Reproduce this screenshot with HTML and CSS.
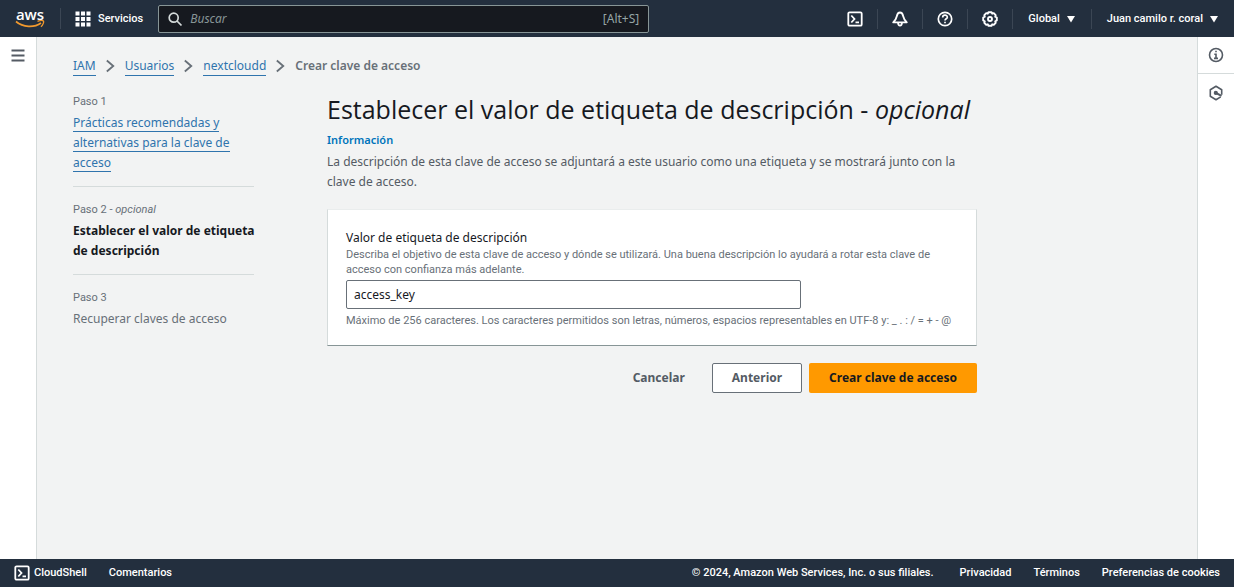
FILE: index.html
```html
<!DOCTYPE html>
<html lang="es">
<head>
<meta charset="utf-8">
<meta name="viewport" content="width=device-width, initial-scale=1">
<title>Crear clave de acceso | IAM</title>
<link rel="stylesheet" href="styles.css">
</head>
<body class="page">
<header class="topbar">
  <a class="logo" href="#" aria-label="Inicio de aws">
    <span class="logo-text">aws</span>
    <svg class="logo-smile" viewBox="0 0 30 9" aria-hidden="true"><path d="M1 1.500C8 7.500 19 8 26 3" fill="none" stroke="#f29a2e" stroke-width="1.700"/><path d="M22.500 1.300C25 .5 28 .4 28.500 1.200S28 5 26 6.800" fill="none" stroke="#f29a2e" stroke-width="1.300"/></svg>
  </a>
  <button class="services" type="button">
    <svg class="icon" viewBox="0 0 16 16" fill="currentColor" aria-hidden="true"><path d="M.5.5h4v4h-4zM6 .5h4v4H6zM11.500.5h4v4h-4zM.5 6h4v4h-4zM6 6h4v4H6zM11.500 6h4v4h-4zM.5 11.500h4v4h-4zM6 11.500h4v4H6zM11.500 11.500h4v4h-4z"/></svg>
    <span>Servicios</span>
  </button>
  <label class="search">
    <svg class="icon" viewBox="0 0 16 16" fill="none" stroke="#d5dbdb" stroke-width="1.700" aria-hidden="true"><circle cx="6.700" cy="6.700" r="4.500"/><path d="M10 10l4.500 4.500"/></svg>
    <input class="search-input" type="search" placeholder="Buscar" aria-label="Buscar">
    <span class="shortcut">[Alt+S]</span>
  </label>
  <nav class="tools" aria-label="Herramientas">
    <button class="tool" type="button" aria-label="CloudShell"><svg class="icon" viewBox="0 0 16 16" fill="none" stroke="currentColor" stroke-width="1.800" aria-hidden="true"><rect x="1.300" y="1.300" width="13.400" height="13.400" rx="1.300"/><path d="M4.300 4.500L7.500 8l-3.200 3.500M8.500 11.300h3.500"/></svg></button>
    <button class="tool" type="button" aria-label="Notificaciones"><svg class="icon" viewBox="0 0 16 16" fill="none" stroke="currentColor" stroke-width="1.800" stroke-linejoin="round" aria-hidden="true"><path d="M8 1.500C5.800 1.500 5.200 3.200 4.800 5.200 4.200 8 3.400 9.300 1.200 11.300h13.600C12.600 9.300 11.800 8 11.200 5.200 10.800 3.200 10.200 1.500 8 1.500zM6 11.800c.2 3.700 3.800 3.700 4 0"/></svg></button>
    <button class="tool" type="button" aria-label="Ayuda"><svg class="icon" viewBox="0 0 16 16" fill="none" stroke="currentColor" stroke-width="1.700" aria-hidden="true"><circle cx="8" cy="8" r="6.700"/><path d="M5.700 6.400C5.700 3.500 10.300 3.500 10.300 6.200 10.300 7.900 8 7.700 8 9.600M8 10.700v1.600"/></svg></button>
    <button class="tool" type="button" aria-label="Configuración"><svg class="icon" viewBox="0 0 16 16" fill="none" stroke="currentColor" stroke-width="1.900" stroke-linejoin="round" aria-hidden="true"><path d="M6.500 1.200h3l.7 1.500 1.600-.5 1.900 1.900-.5 1.600 1.600.8v3l-1.600.8.5 1.600-1.900 1.900-1.600-.5-.7 1.500h-3l-.7-1.500-1.600.5-1.900-1.900.5-1.600-1.600-.8v-3l1.600-.8-.5-1.600 1.900-1.900 1.600.5z"/><circle cx="8" cy="8" r="2"/></svg></button>
    <button class="menu" type="button">Global <svg class="caret" viewBox="0 0 8 8" fill="currentColor" aria-hidden="true"><path d="M0 1h8L4 7.500z"/></svg></button>
    <button class="menu" type="button">Juan camilo r. coral <svg class="caret" viewBox="0 0 8 8" fill="currentColor" aria-hidden="true"><path d="M0 1h8L4 7.500z"/></svg></button>
  </nav>
</header>

<div class="body">
  <aside class="rail rail-left">
    <button class="rail-button" type="button" aria-label="Abrir navegación"><svg class="icon" viewBox="0 0 16 16" fill="none" stroke="currentColor" stroke-width="1.800" aria-hidden="true"><path d="M1.500 2.500h13M1.500 7.500h13M1.500 12.500h13"/></svg></button>
  </aside>
  <main class="content">
    <nav class="breadcrumbs" aria-label="Ruta de navegación">
      <a class="link" href="#">IAM</a>
      <svg class="chevron" viewBox="0 0 12 14" aria-hidden="true"><path d="M2 1l7 6-7 6"/></svg>
      <a class="link" href="#">Usuarios</a>
      <svg class="chevron" viewBox="0 0 12 14" aria-hidden="true"><path d="M2 1l7 6-7 6"/></svg>
      <a class="link" href="#">nextcloudd</a>
      <svg class="chevron" viewBox="0 0 12 14" aria-hidden="true"><path d="M2 1l7 6-7 6"/></svg>
      <span class="current">Crear clave de acceso</span>
    </nav>
    <div class="wizard">
      <ol class="steps">
        <li class="step"><span class="step-label">Paso 1</span><span class="step-title"><a class="link" href="#">Prácticas recomendadas y alternativas para la clave de acceso</a></span></li>
        <li class="step"><span class="step-label">Paso 2 - <i>opcional</i></span><span class="step-title active">Establecer el valor de etiqueta de descripción</span></li>
        <li class="step"><span class="step-label">Paso 3</span><span class="step-title">Recuperar claves de acceso</span></li>
      </ol>
      <form class="form">
        <h1 class="heading">Establecer el valor de etiqueta de descripción - <i>opcional</i></h1>
        <a class="info" href="#">Información</a>
        <p class="intro">La descripción de esta clave de acceso se adjuntará a este usuario como una etiqueta y se mostrará junto con la clave de acceso.</p>
        <section class="card">
          <label class="field-label" for="tag">Valor de etiqueta de descripción</label>
          <p class="help" id="tag-help">Describa el objetivo de esta clave de acceso y dónde se utilizará. Una buena descripción lo ayudará a rotar esta clave de acceso con confianza más adelante.</p>
          <input class="field" id="tag" type="text" value="access_key" aria-describedby="tag-help tag-limit">
          <p class="help" id="tag-limit">Máximo de 256 caracteres. Los caracteres permitidos son letras, números, espacios representables en UTF-8 y: _ . : / = + - @</p>
        </section>
        <div class="actions">
          <button class="button plain" type="button">Cancelar</button>
          <button class="button normal" type="button">Anterior</button>
          <button class="button primary" type="button">Crear clave de acceso</button>
        </div>
      </form>
    </div>
  </main>
  <aside class="rail rail-right">
    <button class="rail-button" type="button" aria-label="Información"><svg class="icon" viewBox="0 0 16 16" fill="none" stroke="currentColor" stroke-width="1.600" aria-hidden="true"><circle cx="8" cy="8" r="6.500"/><path d="M8 3.700v1.600M6.300 7.200H8v4M6 11.400h4"/></svg></button>
    <button class="rail-button" type="button" aria-label="Asistente"><svg class="icon" viewBox="0 0 16 16" fill="none" stroke="currentColor" stroke-width="1.600" stroke-linejoin="round" aria-hidden="true"><path d="M13.700 9.800V4.700L8 1.300 2.300 4.700v6.600L8 14.700l4.700-2.800"/><path d="M7 7.500l6.500 3.400" stroke-width="2"/><circle cx="7.800" cy="7.900" r="1.300" fill="currentColor"/></svg></button>
  </aside>
</div>

<footer class="footer">
  <button class="footer-item" type="button"><svg class="icon" viewBox="0 0 16 16" fill="none" stroke="currentColor" stroke-width="1.800" aria-hidden="true"><rect x="1.300" y="1.300" width="13.400" height="13.400" rx="1.300"/><path d="M4.300 4.500L7.500 8l-3.200 3.500M8.500 11.300h3.500"/></svg>CloudShell</button>
  <button class="footer-item" type="button">Comentarios</button>
  <span class="copyright">© 2024, Amazon Web Services, Inc. o sus filiales.</span>
  <a class="footer-item" href="#">Privacidad</a>
  <a class="footer-item" href="#">Términos</a>
  <button class="footer-item" type="button">Preferencias de cookies</button>
</footer>
</body>
</html>
```
FILE: styles.css
```css
* { box-sizing: border-box; }

.page {
  margin: 0;
  min-height: 100vh;
  display: flex;
  flex-direction: column;
  background: #f2f3f3;
  color: #16191f;
  font: 12px/20px "Noto Sans", "Open Sans", sans-serif;
}

button, input { font: inherit; color: inherit; }
button { margin: 0; padding: 0; border: 0; background: none; cursor: pointer; white-space: nowrap; }
a { color: inherit; text-decoration: none; }
p { margin: 0; }
svg { display: block; flex: none; }
.icon { width: 16px; height: 16px; }

.topbar, .footer, .step-label, .help { font-family: Roboto, "Noto Sans", sans-serif; font-size: 11px; }

.topbar {
  display: flex;
  align-items: center;
  height: 37px;
  background: #232f3e;
  color: #fff;
  font-weight: 500;
  line-height: 18px;
}
.logo {
  display: flex;
  flex-direction: column;
  align-items: center;
  width: 61px;
  border-right: 1px solid #3b4654;
}
.logo-text { font: 600 15px/12px "Open Sans", sans-serif; }
.logo-smile { width: 30px; height: 9px; }
.services { display: flex; align-items: center; gap: 7px; padding: 0 15px 0 14px; }
.search {
  display: flex;
  align-items: center;
  gap: 7px;
  flex: 0 1 491px;
  height: 28px;
  padding: 0 9px 0 8px;
  border: 1px solid #879596;
  border-radius: 2px;
  background: #16191f;
  font: 12px/20px "Noto Sans", sans-serif;
}
.search-input { flex: 1; min-width: 0; padding: 0; border: 0; outline: 0; background: none; }
.search-input::placeholder { color: #879596; font-style: italic; opacity: 1; }
.shortcut { color: #95a5a6; }
.tools { display: flex; align-items: center; margin-left: auto; }
.tool, .menu { display: flex; align-items: center; justify-content: center; height: 20px; border-right: 1px solid #3b4654; }
.tool { width: 45px; }
.menu { gap: 7px; padding: 0 16px 0 15px; }
.menu:last-child { border-right: 0; }
.caret { width: 8px; height: 8px; }

.body { display: flex; flex: 1; }
.rail { width: 37px; background: #fff; color: #545b64; }
.rail-left { border-right: 1px solid #d5dbdb; }
.rail-right { border-left: 1px solid #d5dbdb; }
.rail-button { display: flex; align-items: center; justify-content: center; width: 100%; height: 37px; }
.rail-right .rail-button:first-child { border-bottom: 1px solid #d5dbdb; }

.content { flex: 1; min-width: 0; padding: 19px 36px; }
.link { color: #2f74ad; border-bottom: 1px solid #2f74ad; }
.breadcrumbs { display: flex; align-items: center; gap: 9px; line-height: 18px; height: 20px; }
.chevron { width: 11px; height: 14px; fill: none; stroke: #687078; stroke-width: 2; }
.current { color: #687078; font-weight: 600; }

.wizard {
  display: grid;
  grid-template-columns: 181px minmax(0, 1fr);
  column-gap: 73px;
  max-width: 904px;
  padding-top: 17px;
}
.steps { margin: 0; padding: 0; list-style: none; color: #687078; }
.step { display: flex; flex-direction: column; gap: 2px; padding-bottom: 13px; }
.step + .step { padding-top: 14px; border-top: 1px solid #d5dbdb; }
.step-label { line-height: 18px; }
.step-title { margin-right: -2px; }
.active { color: #16191f; font-weight: 700; }

.heading { margin: 0 0 6px; font: 400 25px/32px "Open Sans", sans-serif; }
.info { display: block; color: #0073bb; font-size: 11px; line-height: 18px; font-weight: 600; }
.intro { padding-top: 3px; color: #545b64; }
.card {
  margin-top: 17px;
  padding: 19px 18px 17px;
  background: #fff;
  border: 1px solid #d5dbdb;
  border-top-color: #eaeded;
  border-bottom-color: #879596;
}
.field-label { display: block; line-height: 18px; }
.help { color: #687078; line-height: 15px; }
.field {
  display: block;
  width: 75%;
  max-width: 455px;
  height: 29px;
  margin: 3px 0 4px;
  padding: 0 7px;
  border: 1px solid #687078;
  border-radius: 2px;
  background: #fff;
}
.actions { display: flex; justify-content: flex-end; gap: 7px; margin-top: 17px; }
.button { height: 30px; padding: 0 19px; border: 1px solid transparent; border-radius: 2px; color: #545b64; font-weight: 700; }
.normal { border-color: #687078; background: #fff; }
.primary { background: #ff9900; color: #16191f; }

.footer {
  display: flex;
  align-items: center;
  gap: 22px;
  height: 28px;
  padding: 0 14px;
  background: #232f3e;
  color: #fff;
  font-weight: 500;
  line-height: 18px;
}
.footer-item { display: flex; align-items: center; gap: 4px; }
.copyright { margin-left: auto; padding-right: 4px; }
```
